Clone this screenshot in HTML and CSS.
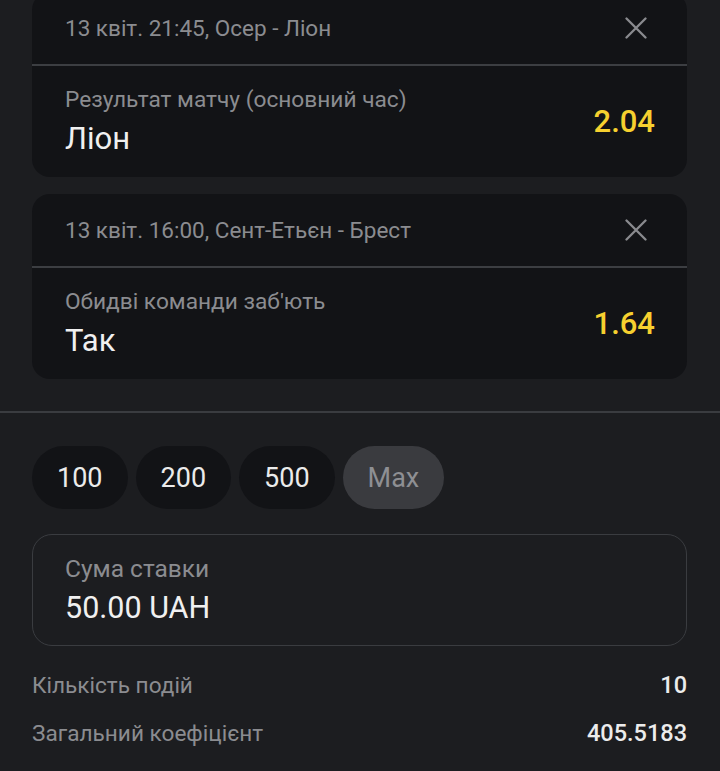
FILE: index.html
```html
<!DOCTYPE html>
<html lang="uk">
<head>
<meta charset="utf-8">
<link rel="stylesheet" href="styles.css">
</head>
<body>
<div class="screen">
  <div class="bets">
    <div class="card">
      <div class="card-head">
        <span class="event">13 квіт. 21:45, Осер - Ліон</span>
        <svg class="close" width="22" height="22" viewBox="0 0 22 22"><path d="M1.5 1.5 L20.5 20.5 M20.5 1.5 L1.5 20.5" stroke="#8a8b8f" stroke-width="2.3" stroke-linecap="round" fill="none"/></svg>
      </div>
      <div class="card-body">
        <div class="pick">
          <div class="market">Результат матчу (основний час)</div>
          <div class="outcome">Ліон</div>
        </div>
        <div class="odds">2.04</div>
      </div>
    </div>
    <div class="card">
      <div class="card-head">
        <span class="event">13 квіт. 16:00, Сент-Етьєн - Брест</span>
        <svg class="close" width="22" height="22" viewBox="0 0 22 22"><path d="M1.5 1.5 L20.5 20.5 M20.5 1.5 L1.5 20.5" stroke="#8a8b8f" stroke-width="2.3" stroke-linecap="round" fill="none"/></svg>
      </div>
      <div class="card-body">
        <div class="pick">
          <div class="market">Обидві команди заб'ють</div>
          <div class="outcome">Так</div>
        </div>
        <div class="odds">1.64</div>
      </div>
    </div>
  </div>
  <div class="separator"></div>
  <div class="stake">
    <div class="chips">
      <div class="chip">100</div>
      <div class="chip">200</div>
      <div class="chip">500</div>
      <div class="chip chip-max">Max</div>
    </div>
    <div class="amount">
      <div class="amount-label">Сума ставки</div>
      <div class="amount-value">50.00 UAH</div>
    </div>
    <div class="summary">
      <div class="row"><span class="row-label">Кількість подій</span><span class="row-value">10</span></div>
      <div class="row"><span class="row-label">Загальний коефіцієнт</span><span class="row-value">405.5183</span></div>
    </div>
  </div>
</div>
</body>
</html>
```

FILE: styles.css
```css
* { box-sizing: border-box; }
html, body {
  margin: 0;
  padding: 0;
  background: #1c1d20;
  overflow: hidden;
}
body {
  font-family: Roboto, "Noto Sans", sans-serif;
  color: #ececec;
  width: 720px;
  height: 771px;
}
.screen {
  margin-top: -8px;
}
.bets {
  padding: 0 33px 0 32px;
  display: flex;
  flex-direction: column;
  gap: 17px;
}
.card {
  background: #121316;
  border-radius: 18px;
  overflow: hidden;
}
.card-head {
  height: 74px;
  display: flex;
  align-items: center;
  justify-content: space-between;
  padding: 0 40px 0 33px;
  border-bottom: 2px solid #3c3e42;
}
.event {
  font-size: 22.5px;
  color: #8b8c90;
}
.close { display: block; }
.card-body {
  display: flex;
  align-items: center;
  justify-content: space-between;
  padding: 19px 32px 20px 33px;
}
.market {
  font-size: 22.7px;
  line-height: 30px;
  color: #8b8c90;
}
.outcome {
  font-size: 31px;
  line-height: 36px;
  margin-top: 6px;
  color: #f0f0f0;
}
.odds {
  font-size: 31px;
  font-weight: 500;
  color: #f6d02f;
  padding-top: 1px;
}
.separator {
  height: 2px;
  background: #3a3c40;
  margin-top: 32px;
}
.stake {
  padding: 33px 33px 0 32px;
}
.chips {
  display: flex;
  gap: 8px;
}
.chip {
  height: 63px;
  padding: 0 25px;
  border-radius: 32px;
  background: #121316;
  display: flex;
  align-items: center;
  font-size: 27px;
  color: #ebebeb;
}
.chip-max {
  background: #3a3b3f;
  color: #8e8f93;
}
.amount {
  margin-top: 25px;
  border: 1.5px solid #3a3c40;
  border-radius: 20px;
  padding: 19px 32px 19px 32px;
}
.amount-label {
  font-size: 24.5px;
  line-height: 30px;
  color: #8b8c90;
}
.amount-value {
  font-size: 30.5px;
  line-height: 36px;
  margin-top: 6px;
  color: #f0f0f0;
}
.summary {
  margin-top: 24px;
  display: flex;
  flex-direction: column;
  gap: 17px;
}
.row {
  display: flex;
  justify-content: space-between;
  align-items: baseline;
  line-height: 30px;
}
.row-label {
  font-size: 22.6px;
  color: #8b8c90;
}
.row-value {
  font-size: 23.5px;
  font-weight: 500;
  color: #ececec;
}
```
